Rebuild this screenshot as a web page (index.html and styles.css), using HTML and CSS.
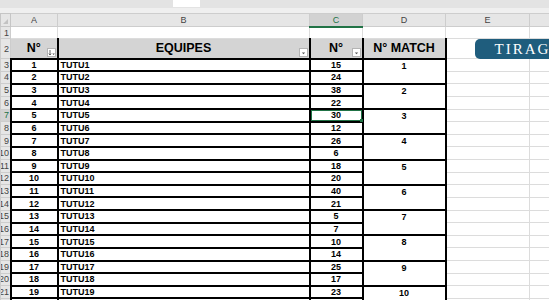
FILE: index.html
```html
<!DOCTYPE html>
<html>
<head>
<meta charset="utf-8">
<link rel="stylesheet" href="styles.css">
</head>
<body>
<div class="ribbon"><div class="formula"></div></div>
<div class="gap"></div>
<table class="sheet">
<colgroup>
<col class="w-rh"><col class="w-a"><col class="w-b"><col class="w-c"><col class="w-d"><col class="w-e"><col class="w-f">
</colgroup>
<tr class="r-col">
<th class="corner"><span class="tri"></span></th><th class="ch">A</th><th class="ch">B</th><th class="ch ch-sel">C</th><th class="ch">D</th><th class="ch">E</th><th class="ch"></th>
</tr>
<tr class="r-1">
<th class="rh"><div class="rn">1</div></th><td></td><td></td><td></td><td></td><td></td><td></td>
</tr>
<tr class="r-2">
<th class="rh"><div class="rn">2</div></th>
<td class="hd hd-a">N°<span class="fb"><svg width="9" height="9" viewBox="0 0 9 9"><path d="M3 2v5M1.8 5.6 3 7l1.2-1.4" stroke="#555" stroke-width="0.9" fill="none"/><path d="M5.3 5.5h2.6L6.6 7z" fill="#555"/></svg></span></td>
<td class="hd">EQUIPES<span class="fb"><svg width="9" height="9" viewBox="0 0 9 9"><path d="M2.8 4.5h3.4L4.5 6.3z" fill="#555"/></svg></span></td>
<td class="hd">N°<span class="fb"><svg width="9" height="9" viewBox="0 0 9 9"><path d="M2.8 4.5h3.4L4.5 6.3z" fill="#555"/></svg></span></td>
<td class="hd">N° MATCH</td>
<td class="btn-cell"><div class="btn">TIRAGE</div></td>
<td></td>
</tr>
<tr><th class="rh"><div class="rn">3</div></th><td class="n">1</td><td class="t">TUTU1</td><td class="n">15</td><td class="m" rowspan="2">1</td><td></td><td></td></tr>
<tr><th class="rh"><div class="rn">4</div></th><td class="n">2</td><td class="t">TUTU2</td><td class="n">24</td><td></td><td></td></tr>
<tr><th class="rh"><div class="rn">5</div></th><td class="n">3</td><td class="t">TUTU3</td><td class="n">38</td><td class="m" rowspan="2">2</td><td></td><td></td></tr>
<tr><th class="rh"><div class="rn">6</div></th><td class="n">4</td><td class="t">TUTU4</td><td class="n">22</td><td></td><td></td></tr>
<tr><th class="rh rh-sel"><div class="rn">7</div></th><td class="n">5</td><td class="t">TUTU5</td><td class="n sel">30</td><td class="m" rowspan="2">3</td><td></td><td></td></tr>
<tr><th class="rh"><div class="rn">8</div></th><td class="n">6</td><td class="t">TUTU6</td><td class="n">12</td><td></td><td></td></tr>
<tr><th class="rh"><div class="rn">9</div></th><td class="n">7</td><td class="t">TUTU7</td><td class="n">26</td><td class="m" rowspan="2">4</td><td></td><td></td></tr>
<tr><th class="rh"><div class="rn">10</div></th><td class="n">8</td><td class="t">TUTU8</td><td class="n">6</td><td></td><td></td></tr>
<tr><th class="rh"><div class="rn">11</div></th><td class="n">9</td><td class="t">TUTU9</td><td class="n">18</td><td class="m" rowspan="2">5</td><td></td><td></td></tr>
<tr><th class="rh"><div class="rn">12</div></th><td class="n">10</td><td class="t">TUTU10</td><td class="n">20</td><td></td><td></td></tr>
<tr><th class="rh"><div class="rn">13</div></th><td class="n">11</td><td class="t">TUTU11</td><td class="n">40</td><td class="m" rowspan="2">6</td><td></td><td></td></tr>
<tr><th class="rh"><div class="rn">14</div></th><td class="n">12</td><td class="t">TUTU12</td><td class="n">21</td><td></td><td></td></tr>
<tr><th class="rh"><div class="rn">15</div></th><td class="n">13</td><td class="t">TUTU13</td><td class="n">5</td><td class="m" rowspan="2">7</td><td></td><td></td></tr>
<tr><th class="rh"><div class="rn">16</div></th><td class="n">14</td><td class="t">TUTU14</td><td class="n">7</td><td></td><td></td></tr>
<tr><th class="rh"><div class="rn">17</div></th><td class="n">15</td><td class="t">TUTU15</td><td class="n">10</td><td class="m" rowspan="2">8</td><td></td><td></td></tr>
<tr><th class="rh"><div class="rn">18</div></th><td class="n">16</td><td class="t">TUTU16</td><td class="n">14</td><td></td><td></td></tr>
<tr><th class="rh"><div class="rn">19</div></th><td class="n">17</td><td class="t">TUTU17</td><td class="n">25</td><td class="m" rowspan="2">9</td><td></td><td></td></tr>
<tr><th class="rh"><div class="rn">20</div></th><td class="n">18</td><td class="t">TUTU18</td><td class="n">17</td><td></td><td></td></tr>
<tr><th class="rh"><div class="rn">21</div></th><td class="n">19</td><td class="t">TUTU19</td><td class="n">23</td><td class="m" rowspan="2">10</td><td></td><td></td></tr>
<tr><th class="rh"><div class="rn">22</div></th><td class="n"></td><td class="t"></td><td class="n"></td><td></td><td></td></tr>
</table>
</body>
</html>
```
FILE: styles.css
```css
html, body {
  margin: 0;
  padding: 0;
  overflow: hidden;
  background: #ffffff;
  font-family: "Liberation Sans", Arial, sans-serif;
}
.ribbon {
  height: 8px;
  background: #e3e3e3;
  display: flex;
}
.formula {
  margin-left: 173px;
  width: 27px;
  height: 7px;
  background: #ffffff;
}
.gap {
  height: 5px;
  background: #efefef;
}
.sheet {
  border-collapse: collapse;
  table-layout: fixed;
  width: 569px;
}
.w-rh { width: 10px; }
.w-a { width: 47px; }
.w-b { width: 252px; }
.w-c { width: 53px; }
.w-d { width: 83px; }
.w-e { width: 84px; }
.w-f { width: 40px; }
.sheet td, .sheet th {
  padding: 0;
  border: 1px solid #dcdcdc;
  font-size: 9px;
  line-height: 10px;
  overflow: hidden;
  white-space: nowrap;
}
.sheet tr { height: 12.63px; }
.sheet tr.r-col { height: 13px; }
.sheet tr.r-1 { height: 12px; }
.sheet tr.r-2 { height: 20px; }
.sheet th.corner {
  background: #e6e6e6;
  border-color: #c6c6c6;
  position: relative;
}
.tri {
  position: absolute;
  right: 2px;
  bottom: 2px;
  width: 0;
  height: 0;
  border-left: 5px solid transparent;
  border-bottom: 5px solid #c2c2c2;
}
.sheet th.ch {
  background: #e6e6e6;
  border-color: #cdcdcd;
  color: #444;
  font-weight: normal;
  text-align: center;
  font-size: 9px;
}
.sheet th.ch-sel {
  background: #d2d2d2;
  color: #217346;
  border-bottom: 2px solid #217346;
}
.sheet th.rh {
  background: #e6e6e6;
  border-color: #cdcdcd;
  color: #444;
  font-weight: normal;
}
.sheet th.rh-sel {
  background: #d2d2d2;
  color: #217346;
}
.rn {
  width: 8px;
  overflow: hidden;
  display: flex;
  justify-content: flex-end;
  font-size: 9px;
}
.sheet td.hd {
  background: #d4d4d4;
  border-top: 1px solid #dcdcdc;
  border-left: 2px solid #000;
  border-right: 2px solid #000;
  border-bottom: 2px solid #000;
  text-align: center;
  font-weight: bold;
  font-size: 12.5px;
  line-height: 14px;
  position: relative;
  overflow: visible;
}
.sheet td.hd-a { border-left: 1px solid #cdcdcd; }
.fb {
  position: absolute;
  right: 1px;
  bottom: 1px;
  width: 9px;
  height: 9px;
  background: #fff;
  border: 1px solid #b4b4b4;
  box-sizing: border-box;
  display: flex;
}
.fb svg { margin: -1px; }
.sheet td.n, .sheet td.t, .sheet td.m {
  border: 2px solid #000;
  font-weight: bold;
  color: #000;
}
.sheet td.n { text-align: center; }
.sheet td.t { padding-left: 2px; }
.sheet td.m {
  text-align: center;
  vertical-align: top;
  padding-top: 1px;
}
.sheet td.sel { position: relative; overflow: visible; }
.sel::after {
  content: "";
  position: absolute;
  left: 0;
  top: 0;
  right: 0;
  bottom: 0;
  border: 1px solid #217346;
}
.sel::before {
  content: "";
  position: absolute;
  right: -1px;
  bottom: -1px;
  width: 3px;
  height: 3px;
  background: #217346;
  z-index: 1;
}
.sheet td.btn-cell {
  position: relative;
  overflow: visible;
}
.btn {
  position: absolute;
  left: 28px;
  top: 0;
  width: 110px;
  height: 20px;
  box-sizing: border-box;
  border-radius: 5px;
  background: #1f5d7d;
  color: #fff;
  font-family: "Liberation Serif", "Times New Roman", serif;
  font-size: 15px;
  line-height: 20px;
  letter-spacing: 2px;
  padding-left: 20px;
  z-index: 2;
}
```
